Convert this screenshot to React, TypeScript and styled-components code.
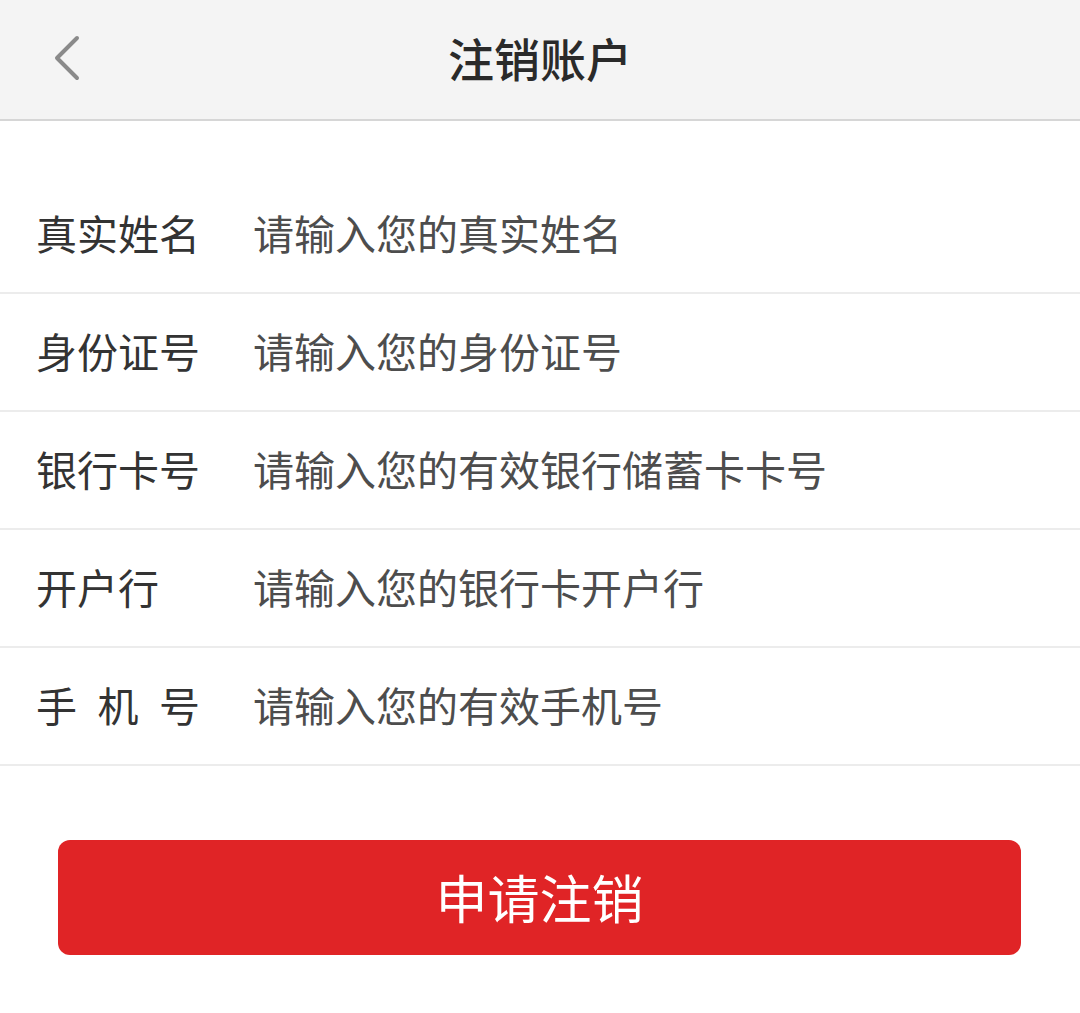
import React from "react";
import styled, { createGlobalStyle } from "styled-components";

const Global = createGlobalStyle`
  html, body { margin: 0; padding: 0; background: #ffffff; }
  body { font-family: "Noto Sans CJK SC", "Noto Sans", sans-serif; }
  * { box-sizing: border-box; }
`;

const Page = styled.div`
  width: 1080px;
  min-height: 1013px;
  background: #ffffff;
  display: flex;
  flex-direction: column;
`;

const Header = styled.header`
  height: 121px;
  background: #f4f4f4;
  border-bottom: 2px solid #d6d6d6;
  display: grid;
  grid-template-columns: 120px 1fr 120px;
  align-items: center;
`;

const BackButton = styled.button`
  border: none;
  background: transparent;
  padding: 0 0 0 50px;
  height: 100%;
  display: flex;
  align-items: center;
  cursor: pointer;
  margin-top: -4px;
`;

const Title = styled.h1`
  margin: 0;
  text-align: center;
  font-size: 46px;
  font-weight: 500;
  color: #2a2a2a;
  margin-top: -6px;
`;

const Form = styled.div`
  margin-top: 55px;
  display: flex;
  flex-direction: column;
`;

const Row = styled.label`
  height: 118px;
  display: flex;
  align-items: center;
  padding-left: 36px;
  border-bottom: 2px solid #ececec;
  padding-bottom: 4px;
  white-space: nowrap;
`;

const Label = styled.span<{ $spread?: boolean }>`
  width: 217px;
  flex-shrink: 0;
  font-size: 41px;
  color: #333333;
  display: flex;
  & > span {
    width: 164px;
    display: flex;
    justify-content: ${(p) => (p.$spread ? "space-between" : "flex-start")};
  }
`;

const Char = styled.span``;

const Placeholder = styled.span`
  font-size: 41px;
  color: #4d4d4d;
`;

const ButtonWrap = styled.div`
  padding: 74px 59px 0 58px;
`;

const SubmitButton = styled.button`
  width: 100%;
  height: 115px;
  border: none;
  border-radius: 12px;
  background: #e02426;
  color: #ffffff;
  font-family: "Noto Sans CJK SC", "Noto Sans", sans-serif;
  font-size: 52px;
  font-weight: 400;
  cursor: pointer;
  padding-bottom: 4px;
`;

const fields = [
  { label: "真实姓名", placeholder: "请输入您的真实姓名" },
  { label: "身份证号", placeholder: "请输入您的身份证号" },
  { label: "银行卡号", placeholder: "请输入您的有效银行储蓄卡卡号" },
  { label: "开户行", placeholder: "请输入您的银行卡开户行" },
  { label: "手机号", placeholder: "请输入您的有效手机号", spread: true },
];

export default function App() {
  return (
    <Page>
      <Global />
      <Header>
        <BackButton aria-label="返回">
          <svg width="32" height="48" viewBox="0 0 32 48">
            <path d="M27 4 L7 24 L27 44" fill="none" stroke="#8a8a8a" strokeWidth="4" strokeLinecap="round" strokeLinejoin="round" />
          </svg>
        </BackButton>
        <Title>注销账户</Title>
        <div />
      </Header>
      <Form>
        {fields.map((f) => (
          <Row key={f.label}>
            <Label $spread={f.spread}>
              <span>
                {f.spread ? f.label.split("").map((c) => <Char key={c}>{c}</Char>) : f.label}
              </span>
            </Label>
            <Placeholder>{f.placeholder}</Placeholder>
          </Row>
        ))}
      </Form>
      <ButtonWrap>
        <SubmitButton>申请注销</SubmitButton>
      </ButtonWrap>
    </Page>
  );
}
